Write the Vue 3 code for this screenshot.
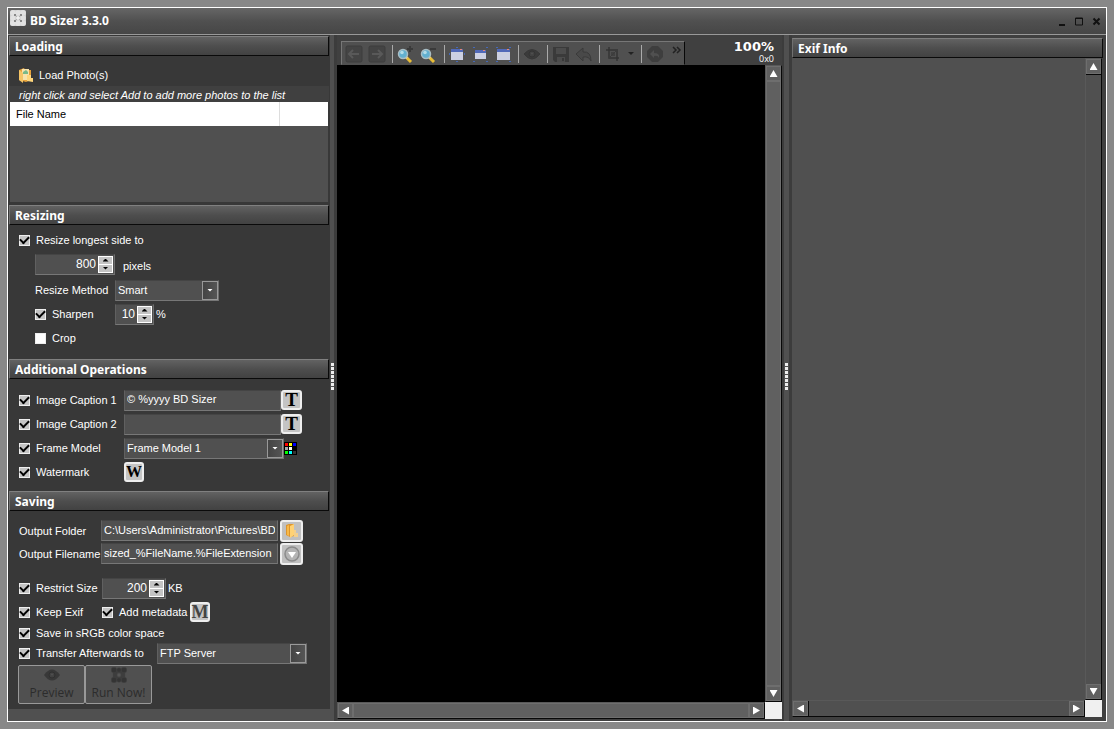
<script setup>
import { ref, reactive } from 'vue'

const resize = reactive({ on: true, size: '800', method: 'Smart', sharpen: true, amount: '10', crop: false })
const extra = reactive({ c1: true, c2: true, frame: true, mark: true, text1: '© %yyyy BD Sizer', text2: '', model: 'Frame Model 1' })
const saving = reactive({
  folder: 'C:\\Users\\Administrator\\Pictures\\BD', filename: 'sized_%FileName.%FileExtension',
  restrict: true, size: '200', exif: true, meta: true, srgb: true, transfer: true, target: 'FTP Server'
})
const swatches = ref(['#f00', '#ff0', '#00f', '#aaa', '#fff', '#000', '#0f0', '#0ff', '#333'])
const frames = [
  { name: 'Fit to window', x: 3, y: 4, w: 12, h: 11 },
  { name: 'Shrink to window', x: 4, y: 5, w: 11, h: 9 },
  { name: 'Fill window', x: 3, y: 4, w: 13, h: 11 }
]
</script>

<template>
  <div class="desktop">
    <div class="window">
      <header class="titlebar">
        <svg class="logo" width="16" height="16" viewBox="0 0 16 16">
          <rect width="16" height="16" rx="2" fill="#d2d2d2" />
          <g fill="#e2e2e2">
            <circle cx="3" cy="3" r="2.8" /><circle cx="8" cy="2.8" r="2.6" /><circle cx="13" cy="3" r="2.8" />
            <circle cx="3" cy="13" r="2.8" /><circle cx="8" cy="13.2" r="2.6" /><circle cx="13" cy="13" r="2.8" />
            <circle cx="2.8" cy="8" r="2.5" /><circle cx="13.2" cy="8" r="2.5" />
          </g>
          <path d="M4 4h2v2H4zM10 4h2v2h-2zM4 10h2v2H4zM10 10h2v2h-2z" fill="#888" />
          <path d="M6 6l4 4M10 6l-4 4" stroke="#aaa" />
          <circle cx="8" cy="8" r="1.8" fill="#eee" />
        </svg>
        <h1>BD Sizer 3.3.0</h1>
        <button class="win" aria-label="Minimize"><svg width="9" height="9"><path d="M1 7h6v2H1z" fill="#111" /></svg></button>
        <button class="win" aria-label="Maximize"><svg width="9" height="9"><path d="M.5 1h7v7h-7zM0 1.5h8" fill="none" stroke="#111" /></svg></button>
        <button class="win" aria-label="Close"><svg width="9" height="9"><path d="M1.5 1.5l6 6M7.5 1.5l-6 6" stroke="#111" stroke-width="2" /></svg></button>
      </header>

      <div class="body">
        <aside class="side">
          <section class="loading">
            <h2>Loading</h2>
            <button class="load">
              <svg width="16" height="16" viewBox="0 0 16 16">
                <path d="M1 3l5-2 1 2h6v10l-5 2-7-2z" fill="#e8a33a" />
                <path d="M4 2h7v11H4z" fill="#f7e3ac" /><path d="M5 5l3-2 2 2v2H5z" fill="#79b989" />
                <path d="M1 3l4 3v10l-4-3z" fill="#f6c566" /><path d="M9 8h4v3h2v4l-6-1z" fill="#ffd67c" />
              </svg>
              <span>Load Photo(s)</span>
            </button>
            <p class="hint">right click and select Add to add more photos to the list</p>
            <table class="files"><thead><tr><th>File Name</th><th class="narrow"></th></tr></thead></table>
            <div class="filelist"></div>
          </section>

          <section class="resizing">
            <h2>Resizing</h2>
            <label class="row"><input v-model="resize.on" type="checkbox" />Resize longest side to</label>
            <div class="row indent number">
              <span class="spin wide"><input v-model="resize.size" aria-label="Longest side" /><span class="steps"><button aria-label="Up"><i class="up"></i></button><button aria-label="Down"><i class="down"></i></button></span></span>
              <span class="unit">pixels</span>
            </div>
            <div class="row indent">
              <label class="method" for="method">Resize Method</label>
              <span class="pick smart"><select id="method" v-model="resize.method"><option>Smart</option></select><b><i class="down"></i></b></span>
            </div>
            <div class="row indent">
              <label class="method"><input v-model="resize.sharpen" type="checkbox" />Sharpen</label>
              <span class="spin small"><input v-model="resize.amount" aria-label="Sharpen amount" /><span class="steps"><button aria-label="Up"><i class="up"></i></button><button aria-label="Down"><i class="down"></i></button></span></span>
              <span class="after">%</span>
            </div>
            <label class="row indent"><input v-model="resize.crop" type="checkbox" />Crop</label>
          </section>

          <section class="additional">
            <h2>Additional Operations</h2>
            <div class="row">
              <label class="lead"><input v-model="extra.c1" type="checkbox" />Image Caption 1</label>
              <input v-model="extra.text1" class="field caption" aria-label="Caption 1 text" /><button class="tile">T</button>
            </div>
            <div class="row">
              <label class="lead"><input v-model="extra.c2" type="checkbox" />Image Caption 2</label>
              <input v-model="extra.text2" class="field caption" aria-label="Caption 2 text" /><button class="tile">T</button>
            </div>
            <div class="row">
              <label class="lead"><input v-model="extra.frame" type="checkbox" />Frame Model</label>
              <span class="pick model"><select v-model="extra.model" aria-label="Frame model"><option>Frame Model 1</option></select><b><i class="down"></i></b></span>
              <button class="palette" aria-label="Frame colours"><svg width="13" height="13"><rect width="13" height="13" /><rect v-for="(c, n) in swatches" :key="n" :x="1 + (n % 3) * 4" :y="1 + Math.floor(n / 3) * 4" width="3" height="3" :fill="c" /></svg></button>
            </div>
            <div class="row">
              <label class="lead"><input v-model="extra.mark" type="checkbox" />Watermark</label>
              <button class="tile broad">W</button>
            </div>
          </section>

          <section class="saving">
            <h2>Saving</h2>
            <div class="row output">
              <label class="name" for="folder">Output Folder</label>
              <input id="folder" v-model="saving.folder" class="field path" />
              <button class="browse" aria-label="Browse"><svg width="14" height="16" viewBox="0 0 14 16"><path d="M1 2l3-1h5v12l-4 1-4-2z" fill="#dd952c" /><path d="M5 3l4-2v11l-4 3z" fill="#ffd275" /><path d="M2 3l2-1v11l-2-1z" fill="#f8b948" /><path d="M9 7h2v3h2v4H9z" fill="#f3cf8c" /></svg></button>
            </div>
            <div class="row output">
              <label class="name" for="filename">Output Filename</label>
              <input id="filename" v-model="saving.filename" class="field path" />
              <button class="browse" aria-label="Insert tag"><svg width="16" height="16"><circle cx="8" cy="8" r="7" fill="#b4b4b4" stroke="#8b8b8b" stroke-width="1.5" /><path d="M4 6h8l-4 6z" fill="#fff" /></svg></button>
            </div>
            <div class="row restrict">
              <label class="size"><input v-model="saving.restrict" type="checkbox" />Restrict Size</label>
              <span class="spin kb"><input v-model="saving.size" aria-label="Maximum size" /><span class="steps"><button aria-label="Up"><i class="up"></i></button><button aria-label="Down"><i class="down"></i></button></span></span>
              <span class="after">KB</span>
            </div>
            <div class="row">
              <label class="size"><input v-model="saving.exif" type="checkbox" />Keep Exif</label>
              <label class="meta"><input v-model="saving.meta" type="checkbox" />Add metadata</label>
              <button class="tile broad gray">M</button>
            </div>
            <label class="row short"><input v-model="saving.srgb" type="checkbox" />Save in sRGB color space</label>
            <div class="row send">
              <label class="transfer"><input v-model="saving.transfer" type="checkbox" />Transfer Afterwards to</label>
              <span class="pick server"><select v-model="saving.target" aria-label="Transfer target"><option>FTP Server</option></select><b><i class="down"></i></b></span>
            </div>
            <div class="actions">
              <button><svg width="16" height="12" viewBox="0 0 16 12"><path d="M0 6q8-11 16 0q-8 11-16 0z" fill="#383838" /><circle cx="8" cy="6" r="3" fill="#424242" stroke="#303030" /><circle cx="8" cy="5.5" r="1" fill="#505050" /></svg>Preview</button>
              <button><svg width="16" height="16" viewBox="0 0 16 16"><g fill="#343434" stroke="#444" stroke-width=".5"><path d="M2 2h12v12H2z" fill="#3d3d3d" /><circle cx="3" cy="3" r="2.8" /><circle cx="8" cy="3" r="2.3" /><circle cx="13" cy="3" r="2.8" /><circle cx="3" cy="13" r="2.8" /><circle cx="8" cy="13" r="2.3" /><circle cx="13" cy="13" r="2.8" /><circle cx="8" cy="8" r="2" fill="#555" /></g></svg>Run Now!</button>
            </div>
          </section>
        </aside>

        <div class="split"><span class="grip"></span></div>

        <main class="viewer">
          <div class="bar">
            <div class="tools">
              <button aria-label="Previous"><svg width="18" height="18"><rect x="1" y="1" width="16" height="16" rx="1.5" fill="#444" stroke="#3d3d3d" /><path d="M14 9H4M8 5L4 9l4 4" fill="none" stroke="#595959" stroke-width="2" /></svg></button>
              <button class="next" aria-label="Next"><svg width="18" height="18"><rect x="1" y="1" width="16" height="16" rx="1.5" fill="#444" stroke="#3d3d3d" /><path d="M4 9h10M10 5l4 4-4 4" fill="none" stroke="#595959" stroke-width="2" /></svg></button>
              <span class="sep"></span>
              <button v-for="sign in ['plus', 'minus']" :key="sign" :class="['mag', sign]" :aria-label="'Zoom ' + sign"><svg width="18" height="18"><path d="M10 12l5 5" stroke="#e8bd36" stroke-width="3" /><path d="M9 11l2 2" stroke="#ddd" stroke-width="2" /><circle cx="7" cy="9" r="4.5" fill="#62b0d0" stroke="#a9bdc4" stroke-width="1.5" /><circle cx="6" cy="7.5" r="1.8" fill="#b2dce8" /><path d="M11 4h6" stroke="#3a3a3a" stroke-width="2" /><path v-if="sign === 'plus'" d="M14 1v6" stroke="#3a3a3a" stroke-width="2" /></svg></button>
              <span class="sep"></span>
              <button v-for="(f, n) in frames" :key="f.name" class="frame" :aria-label="f.name"><svg width="18" height="18"><rect :x="f.x" :y="f.y" :width="f.w" :height="f.h" fill="#ccd0e2" /><rect :x="f.x" :y="f.y" :width="f.w" height="3" fill="#5169b8" /><rect :x="f.x + f.w - 3" :y="f.y" width="2" height="1" fill="#e68a78" /><path v-if="n === 0" d="M8 2h2v1H8zM8 16h2v1H8zM1 8h1v2H1zM16 8h1v2h-1z" fill="#4569b8" /><path v-else d="M2 2h2v1H2zM15 2h2v1h-2zM2 16h2v1H2zM15 16h2v1h-2z" fill="#4569b8" /></svg></button>
              <span class="sep"></span>
              <button class="tight" aria-label="Preview"><svg width="18" height="18"><path d="M1 9q8-9 16 0q-8 10-16 0z" fill="#3b3b3b" stroke="#383838" /><circle cx="9" cy="9" r="3" fill="#424242" stroke="#343434" /><circle cx="9" cy="8.5" r="1" fill="#505050" /></svg></button>
              <span class="sep"></span>
              <button class="tight" aria-label="Save"><svg width="18" height="18"><path d="M1 2h16v15H3l-2-2z" fill="#3a3a3a" /><path d="M4 3h10v6H4zM5 12h8v5H5z" fill="#4c4c4c" /><path d="M10 13h2v3h-2z" fill="#383838" /></svg></button>
              <button aria-label="Undo"><svg width="18" height="18"><path d="M1 9l7-6v4q8-1 8 9q-2-5-8-4v4z" fill="#494949" stroke="#3a3a3a" /></svg></button>
              <span class="sep"></span>
              <button class="tight" aria-label="Crop"><svg width="18" height="18"><path d="M5 2v11h10M2 5h11v11" fill="none" stroke="#343434" stroke-width="1.5" /><path d="M7 7h4v4H7z" fill="#404040" /><path d="M5 13l9-9" stroke="#3b3b3b" /></svg></button>
              <button class="drop" aria-label="Crop options"><i class="down"></i></button>
              <span class="sep"></span>
              <button class="tight" aria-label="Restore"><svg width="18" height="18"><path d="M6 1h6l5 5v6l-5 5H6l-5-5V6z" fill="#3e3e3e" /><path d="M4 9l4-4v3q6 0 5 5q-1-3-5-2v2z" fill="#505050" /></svg></button>
              <button class="more" aria-label="More tools"><svg width="10" height="8"><path d="M1 1l3 3-3 3M5 1l3 3-3 3" fill="none" stroke="#222" stroke-width="1.5" /></svg></button>
            </div>
            <div class="zoom"><strong>100%</strong><span>0x0</span></div>
          </div>
          <div class="scroller">
            <div class="canvas"></div>
            <div class="vscroll"><button aria-label="Scroll up"><i class="arrow n"></i></button><span class="thumb"></span><button aria-label="Scroll down"><i class="arrow s"></i></button></div>
            <div class="hscroll"><button aria-label="Scroll left"><i class="arrow w"></i></button><span class="thumb"></span><button aria-label="Scroll right"><i class="arrow e"></i></button></div>
            <div class="corner"></div>
          </div>
        </main>

        <div class="split second"><span class="grip"></span></div>

        <section class="exif">
          <h2>Exif Info</h2>
          <div class="scroller">
            <div></div>
            <div class="vscroll"><button aria-label="Scroll up"><i class="arrow n"></i></button><span class="track"></span><button aria-label="Scroll down"><i class="arrow s"></i></button></div>
            <div class="hscroll"><button aria-label="Scroll left"><i class="arrow w"></i></button><span class="track"></span><button aria-label="Scroll right"><i class="arrow e"></i></button></div>
            <div class="corner"></div>
          </div>
        </section>
      </div>
    </div>
  </div>
</template>

<style>
body { margin: 0; background: #888; }
</style>

<style scoped>
* { box-sizing: border-box; }
button, input, select { font: inherit; color: inherit; margin: 0; padding: 0; border: 0; border-radius: 0; background: none; outline: 0; }
svg, i { display: block; flex: none; }
.desktop { min-height: 100vh; padding: 7px; display: flex; background: #888; font: 11px/14px "Liberation Sans", Arial, sans-serif; color: #fff; }
.window { flex: 1; min-width: 0; display: flex; flex-direction: column; border: 1px solid #fff; background: #505050; }
.titlebar { height: 27px; display: flex; align-items: center; padding: 0 1px 0 2px; background: linear-gradient(#666, #505050 50%, #464646); border-bottom: 1px solid #999; }
.logo { align-self: flex-start; margin-top: 2px; }
h1 { flex: 1; margin: 0 0 0 4px; font: bold 12px/18px "Noto Sans", "Open Sans", sans-serif; }
.win { width: 17px; height: 17px; display: grid; place-items: center; }
.body { flex: 1; display: grid; grid-template-columns: 322px 7px minmax(0, 1fr) 10px 314px; }
h2 { margin: 0; height: 20px; padding: 1px 5px 0; font: bold 12px/18px "Noto Sans", "Open Sans", sans-serif; background: linear-gradient(#626262, #4e4e4e 50%, #424242); border: 1px solid; border-color: #808080 #0a0a0a #0a0a0a #707070; }

.side { align-self: start; padding: 1px 1px 5px; background: #383838; }
.load { width: 100%; height: 30px; padding: 8px 9px 0; display: flex; align-items: center; gap: 5px; }
.hint { margin: 0; height: 16px; padding: 2px 10px 0; background: #404040; font-style: italic; }
.files { width: 318px; margin-left: 1px; border-collapse: collapse; background: #fff; color: #000; }
.files th { height: 24px; padding: 0 6px; text-align: left; font-weight: normal; }
.files .narrow { width: 49px; border-left: 1px solid #ddd; }
.filelist { height: 76px; margin: 0 1px; background: #505050; }
.loading { padding-bottom: 3px; }
.resizing { padding-bottom: 9px; }
.additional { padding-bottom: 7px; }
.additional h2 { margin-bottom: 9px; }
.resizing h2 { margin-bottom: 3px; }
.saving h2 { margin-bottom: 8px; }
.row { height: 24px; padding-left: 10px; display: flex; align-items: center; }
.row.indent { padding-left: 26px; }
.row.number { height: 26px; padding-bottom: 2px; }
label { display: flex; align-items: center; flex: none; white-space: nowrap; }
input[type="checkbox"] { appearance: none; width: 11px; height: 11px; margin-right: 6px; flex: none; display: grid; place-items: center; background: #fff; border: 1px solid #eee; }
input[type="checkbox"]:checked { background: #c4c4c4; }
input[type="checkbox"]:checked::before { content: ""; width: 7px; height: 4px; margin-bottom: 3px; border: solid #000; border-width: 0 0 2px 2px; transform: rotate(-45deg); }
.field, .spin, .pick { height: 21px; background: #505050; border: 1px solid; border-color: #444 #6e6e6e #777 #606060; }
.field { padding: 0 2px 2px; }
.spin { display: flex; align-items: center; padding-right: 1px; }
.spin > input { flex: 1; min-width: 0; padding-right: 2px; text-align: right; font-size: 12px; }
.steps { width: 15px; height: 17px; display: grid; gap: 1px; padding: 1px; background: #fff; }
.steps button { background: #c4c4c4; display: grid; place-items: center; color: #000; }
.up, .down { width: 6px; height: 3px; background: currentColor; clip-path: polygon(0 0, 100% 0, 50% 100%); }
.up { clip-path: polygon(0 100%, 100% 100%, 50% 0); }
.pick { display: grid; grid-template-columns: 1fr 16px; }
.pick select { appearance: none; grid-area: 1 / 1 / 2 / 3; padding: 0 2px; }
.pick b { grid-area: 1 / 2; display: grid; place-items: center; border: 1px solid #999; background: linear-gradient(90deg, #444, #555); pointer-events: none; }
.wide { width: 80px; }
.unit { margin: 4px 0 0 8px; }
.method { width: 80px; }
.smart { width: 104px; }
.small { width: 39px; }
.after { margin-left: 2px; }
.lead { width: 105px; }
.caption { width: 157px; }
.model { width: 160px; }
.server { width: 150px; }
.tile { width: 21px; height: 20px; color: #000; background: #c4c4c4; border: 2px solid #eee; border-radius: 3px; font: bold 19px/16px "Liberation Serif", serif; }
.tile.broad { width: 20px; font-size: 16px; }
.tile.gray { color: #444; margin-left: 2px; font-size: 18px; }
.output { height: 23px; }
.name { width: 82px; }
.path { width: 177px; }
.browse { width: 23px; height: 22px; margin-left: 2px; display: grid; place-items: center; background: #c0c0c0; border: 2px solid #eee; border-radius: 3px; }
.restrict { margin-top: 11px; }
.size { width: 83px; }
.kb { width: 64px; }
.short { height: 18px; }
.send { height: 22px; }
.transfer { width: 138px; }
.actions { display: flex; padding: 1px 9px 0; }
.actions button { width: 67px; height: 39px; display: flex; flex-direction: column; align-items: center; justify-content: space-between; padding: 1px 0; color: #2c2c2c; background: #505050; border: 1px solid #999; border-radius: 2px; font: 12px/18px "Open Sans", "Noto Sans", sans-serif; }
.actions svg { height: 16px; }

.split { display: flex; align-items: center; padding-left: 1px; background: linear-gradient(90deg, #505050 4px, #3c3c3c 4px); }
.split.second { padding-left: 3px; background: linear-gradient(90deg, #3c3c3c 2px, #505050 2px 7px, #3c3c3c 7px); }
.grip { width: 3px; height: 28px; margin-bottom: 2px; background: repeating-linear-gradient(#eee 0 3px, #505050 3px 4px); }
.viewer { display: flex; flex-direction: column; padding-bottom: 2px; background: #404040; }
.bar { height: 30px; display: flex; align-items: flex-end; justify-content: space-between; padding: 0 8px 0 4px; }
.tools { height: 24px; display: flex; align-items: center; padding: 1px 2px 0 3px; background: #505050; border: 1px solid; border-color: #777 #080808 #505050 #777; }
.tools button { display: flex; }
.tools .next { margin-left: 5px; }
.sep { width: 1px; height: 18px; background: #aaa; margin: 0 3px 0 6px; }
.tools .minus { margin-left: 5px; }
.tools .minus + .sep { margin-left: 7px; }
.tools .frame + .frame { margin-left: 5px; }
.tools .tight { margin-left: 1px; }
.tools .tight + button { margin-left: 5px; }
.tools .tight + .drop { width: 8px; justify-content: center; color: #222; }
.tools .tight + .more { align-self: flex-start; margin: 3px 0 0 8px; }
.zoom { align-self: stretch; display: flex; flex-direction: column; align-items: flex-end; padding-top: 5px; }
.zoom strong { font: bold 13px/14px "DejaVu Sans", sans-serif; }
.zoom span { font: 9px/10px "Open Sans", sans-serif; }
.scroller { flex: 1; display: grid; grid-template-columns: 1fr 17px; grid-template-rows: 1fr 17px; background: #505050; }
.canvas { background: #000; }
.vscroll, .hscroll { display: flex; border: 1px solid; border-color: #595959 #080808 #080808 #595959; background: #505050; }
.vscroll { flex-direction: column; }
.vscroll button, .hscroll button { width: 15px; height: 15px; flex: none; display: grid; place-items: center; background: #606060; outline: 1px solid #6e6e6e; outline-offset: -1px; }
.vscroll button { box-shadow: 0 1px #080808; }
.hscroll button { box-shadow: 1px 0 #080808; }
.thumb, .track { flex: 1; margin: 1px; }
.thumb { background: #606060; box-shadow: 0 0 0 1px #6e6e6e, 1px 1px 0 1px #080808; }
.arrow { background: #fff; }
.n, .s { width: 8px; height: 7px; }
.w, .e { width: 7px; height: 8px; }
.n { clip-path: polygon(50% 0, 100% 100%, 0 100%); }
.s { clip-path: polygon(0 0, 100% 0, 50% 100%); }
.w { clip-path: polygon(100% 0, 100% 100%, 0 50%); }
.e { clip-path: polygon(0 0, 100% 50%, 0 100%); }
.corner { background: #f0f0f0; }
.exif { display: flex; flex-direction: column; padding: 3px 3px 4px 0; background: #404040; }
.exif .scroller { margin-right: 1px; }
</style>
